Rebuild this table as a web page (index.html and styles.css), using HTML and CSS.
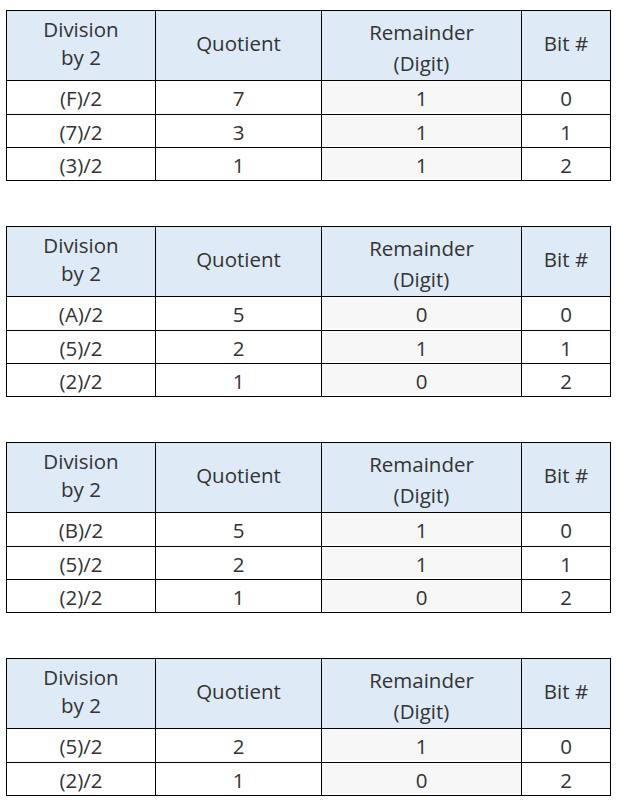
FILE: index.html
```html
<!DOCTYPE html>
<html>
<head>
<meta charset="utf-8">
<link rel="stylesheet" href="styles.css">
</head>
<body>
<div class="stack">
  <table class="div-table">
    <colgroup><col class="c1"><col class="c2"><col class="c3"><col class="c4"></colgroup>
    <thead>
      <tr><th class="h-div">Division<br>by 2</th><th>Quotient</th><th class="h-rem">Remainder<br>(Digit)</th><th>Bit #</th></tr>
    </thead>
    <tbody>
      <tr class="first"><td>(F)/2</td><td>7</td><td class="rem">1</td><td>0</td></tr>
      <tr><td>(7)/2</td><td>3</td><td class="rem">1</td><td>1</td></tr>
      <tr><td>(3)/2</td><td>1</td><td class="rem">1</td><td>2</td></tr>
    </tbody>
  </table>

  <table class="div-table">
    <colgroup><col class="c1"><col class="c2"><col class="c3"><col class="c4"></colgroup>
    <thead>
      <tr><th class="h-div">Division<br>by 2</th><th>Quotient</th><th class="h-rem">Remainder<br>(Digit)</th><th>Bit #</th></tr>
    </thead>
    <tbody>
      <tr class="first"><td>(A)/2</td><td>5</td><td class="rem">0</td><td>0</td></tr>
      <tr><td>(5)/2</td><td>2</td><td class="rem">1</td><td>1</td></tr>
      <tr><td>(2)/2</td><td>1</td><td class="rem">0</td><td>2</td></tr>
    </tbody>
  </table>

  <table class="div-table">
    <colgroup><col class="c1"><col class="c2"><col class="c3"><col class="c4"></colgroup>
    <thead>
      <tr><th class="h-div">Division<br>by 2</th><th>Quotient</th><th class="h-rem">Remainder<br>(Digit)</th><th>Bit #</th></tr>
    </thead>
    <tbody>
      <tr class="first"><td>(B)/2</td><td>5</td><td class="rem">1</td><td>0</td></tr>
      <tr><td>(5)/2</td><td>2</td><td class="rem">1</td><td>1</td></tr>
      <tr><td>(2)/2</td><td>1</td><td class="rem">0</td><td>2</td></tr>
    </tbody>
  </table>

  <table class="div-table">
    <colgroup><col class="c1"><col class="c2"><col class="c3"><col class="c4"></colgroup>
    <thead>
      <tr><th class="h-div">Division<br>by 2</th><th>Quotient</th><th class="h-rem">Remainder<br>(Digit)</th><th>Bit #</th></tr>
    </thead>
    <tbody>
      <tr class="first"><td>(5)/2</td><td>2</td><td class="rem">1</td><td>0</td></tr>
      <tr><td>(2)/2</td><td>1</td><td class="rem">0</td><td>2</td></tr>
    </tbody>
  </table>
</div>
</body>
</html>
```
FILE: styles.css
```css
html, body {
  margin: 0;
  padding: 0;
  background: #ffffff;
}

body {
  font-family: "Open Sans", "Noto Sans", sans-serif;
  font-size: 20.5px;
  color: #333333;
}

.stack {
  display: flex;
  flex-direction: column;
  gap: 45px;
  padding: 10px 0 0 6px;
}

.div-table {
  border-collapse: collapse;
  table-layout: fixed;
  width: 604px;
}

.c1 { width: 149px; }
.c2 { width: 166px; }
.c3 { width: 200px; }
.c4 { width: 89px; }

.div-table th,
.div-table td {
  border: 1px solid #000;
  text-align: center;
  font-weight: 400;
  box-sizing: border-box;
}

.div-table th {
  background: #deeaf6;
  height: 70px;
  line-height: 28px;
  padding: 0 0 5px;
}

.div-table th.h-rem {
  line-height: 31px;
  padding: 4px 0 0;
}

.div-table td {
  height: 33px;
  line-height: 29px;
  padding: 2px 0 0;
}

.div-table tr.first td {
  height: 34px;
}

.div-table td.rem {
  background: linear-gradient(to top, #ffffff 0, #ffffff 2px, #f7f7f7 2px);
}
```
